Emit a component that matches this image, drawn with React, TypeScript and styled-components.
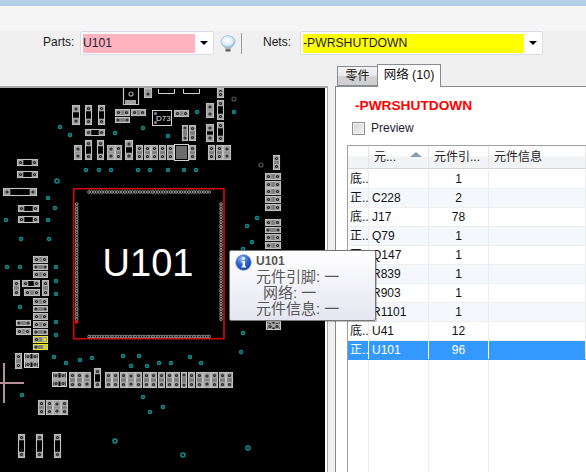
import React from "react";
import styled, { createGlobalStyle } from "styled-components";

const Global = createGlobalStyle`
  html, body { margin: 0; padding: 0; height: 100%; overflow: hidden; background: #f0f0f0; }
  #root { height: 472px; width: 586px; overflow: hidden; }
  * { box-sizing: border-box; }
`;

const Window = styled.div`
  position: relative;
  width: 586px;
  height: 472px;
  display: flex;
  flex-direction: column;
  background: #f0f0f0;
  overflow: hidden;
  font-family: "Liberation Sans", "Noto Sans CJK SC", sans-serif;
  font-size: 12px;
  color: #111;
`;
const TitleStrip = styled.div`
  height: 6px;
  background: #b4cee8;
  flex: none;
`;
const RibbonBand = styled.div`
  height: 25px;
  background: #f5f5f5;
  flex: none;
`;
const Toolbar = styled.div`
  height: 33px;
  flex: none;
  display: flex;
  align-items: flex-start;
  padding-left: 43px;
`;
const ToolLabel = styled.span<{ $width: number }>`
  width: ${(p) => p.$width}px;
  line-height: 23px;
  font-size: 12px;
  color: #1a1a1a;
  flex: none;
`;
const Combo = styled.div<{ $width: number }>`
  width: ${(p) => p.$width}px;
  height: 24px;
  flex: none;
  display: flex;
  align-items: center;
  padding: 2px 0 2px 2px;
  background: #fff;
  border: 1px solid #d9dde3;
  border-radius: 2px;
`;
const ComboValue = styled.div<{ $bg: string }>`
  flex: 1;
  height: 19px;
  line-height: 18px;
  font-size: 12.2px;
  background: ${(p) => p.$bg};
  color: #1c1c38;
`;
const ComboArrow = styled.div`
  width: 18px;
  flex: none;
  display: flex;
  justify-content: center;
  &::after {
    content: "";
    border-left: 4px solid transparent;
    border-right: 4px solid transparent;
    border-top: 4px solid #000;
  }
`;
const BulbSlot = styled.div`
  width: 26px;
  height: 24px;
  flex: none;
  display: flex;
  align-items: center;
  justify-content: center;
  padding-left: 2px;
`;
const ToolDivider = styled.div`
  width: 1px;
  height: 21px;
  margin: 2px 21px 0 1px;
  background: #9a9a9a;
  flex: none;
`;
const Body = styled.div`
  flex: 1;
  min-height: 0;
  display: flex;
`;
const BoardColumn = styled.div`
  width: 335px;
  flex: none;
  padding-top: 22px;
  display: flex;
  flex-direction: column;
`;
const BoardFrame = styled.div`
  width: 328px;
  flex: 1;
  min-height: 0;
  border-top: 2px solid #a8a8a8;
  border-right: 1px solid #a6a6a6;
  background: #fbfbfb;
  overflow: hidden;
`;
const BoardSvg = styled.svg`
  display: block;
  width: 325px;
  height: 384px;
  background: #000;
`;
const SidePanel = styled.div`
  flex: 1;
  min-width: 0;
  display: flex;
  flex-direction: column;
`;
const TabStrip = styled.div`
  height: 22px;
  flex: none;
  display: flex;
  align-items: flex-end;
  padding-left: 2px;
  position: relative;
  z-index: 1;
`;
const Tab = styled.div<{ $active?: boolean }>`
  height: ${(p) => (p.$active ? 23 : 20)}px;
  width: ${(p) => (p.$active ? 64 : 40)}px;
  margin-bottom: ${(p) => (p.$active ? -1 : 0)}px;
  flex: none;
  text-align: center;
  font-size: ${(p) => (p.$active ? 12.5 : 12)}px;
  line-height: ${(p) => (p.$active ? 20 : 19)}px;
  border: 1px solid #898c95;
  border-bottom: ${(p) => (p.$active ? "none" : "1px solid #898c95")};
  border-right: ${(p) => (p.$active ? "1px solid #898c95" : "none")};
  background: ${(p) => (p.$active ? "#fff" : "linear-gradient(#f3f3f3 0%, #ebebeb 45%, #d2d2d2 55%, #cfcfcf 100%)")};
`;
const PanelBody = styled.div`
  flex: 1;
  min-height: 0;
  border: 1px solid #898c95;
  border-right: none;
  border-bottom: none;
  background: #fff;
  display: flex;
  flex-direction: column;
  padding-left: 11px;
`;
const NetTitle = styled.div`
  margin: 10px 0 0 8px;
  font-size: 13.7px;
  font-weight: bold;
  color: #ff0000;
  line-height: 17px;
`;
const PreviewRow = styled.label`
  display: flex;
  align-items: center;
  gap: 6px;
  margin: 6px 0 0 5px;
  height: 16px;
  font-size: 12px;
  color: #1c1c38;
`;
const CheckBox = styled.span`
  width: 13px;
  height: 13px;
  flex: none;
  border: 1px solid #8e8f8f;
  background: linear-gradient(135deg, #d4d4d4, #f4f4f4);
  box-shadow: inset 0 0 0 1px #f4f4f4;
`;
const Table = styled.div`
  flex: 1;
  min-height: 0;
  margin-top: 9px;
  border-top: 1px solid #a0a0a0;
  border-left: 1px solid #a0a0a0;
  display: flex;
  flex-direction: column;
`;
const HeaderRow = styled.div`
  height: 23px;
  flex: none;
  display: grid;
  grid-template-columns: 21px 60px 60px 1fr;
  margin-bottom: 1px;
  border-bottom: 1px solid #d5d5d5;
  background: linear-gradient(#fdfdfd 0%, #fdfdfd 45%, #f2f3f4 50%, #f2f3f4 100%);
`;
const HeaderCell = styled.div`
  position: relative;
  padding: 2px 0 0 5px;
  line-height: 18px;
  font-size: 12px;
  color: #222;
  border-right: 1px solid #e6e6e6;
  white-space: nowrap;
`;
const SortArrow = styled.span`
  position: absolute;
  right: 6px;
  top: 6px;
  border-left: 6px solid transparent;
  border-right: 6px solid transparent;
  border-bottom: 5px solid #8e9bab;
`;
const Row = styled.div<{ $selected?: boolean; $alt?: boolean }>`
  height: 19px;
  flex: none;
  display: grid;
  grid-template-columns: 21px 60px 60px 1fr;
  line-height: 19px;
  font-size: 12px;
  color: ${(p) => (p.$selected ? "#fff" : "#111")};
  background: ${(p) => (p.$selected ? "#3399ff" : p.$alt ? "#f4f7fb" : "#fff")};
  border-bottom: 1px solid ${(p) => (p.$selected ? "#3399ff" : "#f0f0f0")};
`;
const Cell = styled.div<{ $center?: boolean; $inset?: number; $selected?: boolean }>`
  padding-left: ${(p) => p.$inset ?? 0}px;
  text-align: ${(p) => (p.$center ? "center" : "left")};
  border-right: 1px solid ${(p) => (p.$selected ? "#fff" : "#ececec")};
  white-space: nowrap;
  overflow: hidden;
`;
const FillerRow = styled.div`
  flex: 1;
  display: grid;
  grid-template-columns: 21px 60px 60px 1fr;
`;
const FillerCell = styled.div`
  border-right: 1px solid #ececec;
`;
const Tooltip = styled.div`
  position: absolute;
  left: 229px;
  top: 250px;
  width: 147px;
  height: 71px;
  z-index: 3;
  display: flex;
  gap: 4px;
  padding: 3px 0 0 5px;
  border: 1px solid #767676;
  border-radius: 2px;
  background: linear-gradient(#ffffff, #e4e5f0);
  box-shadow: 1px 1px 1px rgba(0, 0, 0, 0.25);
  color: #575757;
`;
const TipIcon = styled.svg`
  width: 17px;
  height: 17px;
  flex: none;
`;
const TipText = styled.div`
  display: flex;
  flex-direction: column;
`;
const TipTitle = styled.div`
  font-size: 12px;
  font-weight: bold;
  line-height: 14px;
  margin-bottom: 1px;
  color: #555;
`;
const TipLine = styled.div<{ $indent?: number }>`
  padding-left: ${(p) => p.$indent ?? 0}px;
  font-size: 15px;
  line-height: 16px;
  white-space: nowrap;
`;

type PartDef = [number, number, number, number];

const verticals: PartDef[] = [
  [72, 105, 8, 20], [85, 105, 7, 20], [98, 105, 7, 20],
  [74, 145, 8, 15], [85, 140, 7, 20], [97, 140, 7, 20], [107, 145, 8, 15], [115, 145, 7, 15],
  [125, 140, 8, 20], [136, 145, 7, 15], [144, 145, 7, 15], [151, 145, 7, 15], [159, 145, 7, 15], [167, 145, 7, 15],
  [189, 145, 7, 15], [208, 145, 7, 15], [216, 145, 7, 15], [223, 145, 8, 15],
  [206, 103, 8, 15], [217, 100, 7, 20], [206, 124, 8, 18], [217, 122, 7, 20], [182, 125, 6, 16], [189, 125, 7, 16],
  [217, 88, 7, 10], [144, 88, 8, 10],
  [273, 155, 7, 15],
  [13, 280, 7, 16], [42, 280, 7, 16],
  [15, 353, 7, 16], [69, 372, 7, 16], [76, 372, 7, 16], [83, 372, 8, 16], [94, 368, 7, 20],
  [105, 372, 7, 16], [112, 372, 7, 16], [120, 372, 7, 16], [127, 372, 8, 16], [135, 372, 7, 16], [143, 372, 7, 16],
  [150, 372, 7, 16], [158, 372, 7, 16], [166, 372, 7, 16], [173, 372, 7, 16], [181, 372, 6, 16], [188, 372, 7, 16],
  [196, 372, 7, 16], [203, 372, 8, 16], [211, 372, 7, 16], [219, 372, 7, 16], [226, 372, 7, 16],
  [38, 400, 7, 15], [46, 400, 7, 15], [53, 400, 8, 15], [61, 400, 7, 15],
  [18, 434, 7, 24], [36, 434, 7, 24], [54, 434, 7, 24],
];

const horizontals: PartDef[] = [
  [115, 109, 15, 7], [131, 109, 15, 7], [115, 117, 15, 6], [85, 129, 20, 7], [174, 110, 15, 7],
  [265, 173, 16, 7], [265, 181, 16, 7], [265, 188, 16, 7], [265, 196, 16, 7], [265, 204, 16, 7],
  [265, 219, 16, 7], [265, 227, 16, 6], [265, 234, 16, 7], [265, 242, 16, 7],
  [17, 159, 21, 7], [17, 171, 21, 7], [3, 188, 34, 8], [18, 205, 21, 7], [18, 216, 21, 7],
  [33, 256, 15, 7], [33, 264, 15, 6], [33, 271, 15, 7], [22, 280, 18, 7], [24, 289, 16, 7],
  [33, 298, 15, 7], [33, 306, 15, 6], [33, 313, 15, 7], [33, 321, 15, 7], [33, 329, 15, 6],
  [16, 320, 15, 6], [16, 328, 15, 7],
];

const bigParts: PartDef[] = [[24, 353, 15, 15], [52, 372, 15, 15], [266, 321, 15, 9]];

const vias: [number, number][] = [
  [60, 127], [70, 135], [115, 133], [143, 128], [168, 136], [86, 170], [99, 170], [111, 170], [138, 170], [150, 170],
  [168, 170], [48, 198], [55, 208], [48, 220], [6, 220], [197, 112], [234, 112], [184, 170], [196, 170], [257, 218],
  [247, 226], [252, 242], [243, 249], [21, 239], [49, 239], [7, 267], [20, 267], [56, 267], [56, 281], [56, 294],
  [20, 307], [56, 322], [56, 335], [54, 357], [66, 363], [80, 360], [92, 358], [123, 356], [139, 356], [131, 366],
  [147, 366], [159, 363], [171, 363], [190, 357], [201, 363], [241, 352], [22, 395], [143, 397], [150, 412], [163, 407],
  [243, 333],
];
const largeVias: [number, number][] = [[57, 181], [115, 441], [248, 448], [183, 455]];

function Pad({ x, y, s, accent }: { x: number; y: number; s: number; accent?: boolean }) {
  return (
    <>
      <rect x={x - s / 2} y={y - s / 2} width={s} height={s} fill="#a2a2a2" />
      <circle cx={x} cy={y} r={1.6} fill={accent ? "#e6e600" : "#262626"} />
      <circle cx={x} cy={y} r={0.5} fill={accent ? "#e6e600" : "#8a8a8a"} />
    </>
  );
}

function Part({ d, accent }: { d: PartDef; accent?: boolean }) {
  const [x, y, w, h] = d;
  const vertical = h > w;
  const s = Math.min(w, h) - 1.4;
  const stroke = accent ? "#ffff00" : "#c6c6c6";
  const shortBody = Math.max(w, h) <= 16;
  return (
    <g>
      <rect x={x + 0.5} y={y + 0.5} width={w - 1} height={h - 1} fill={shortBody ? "#7c7c7c" : "#000"} stroke={stroke} strokeWidth={1.1} />
      {vertical ? (
        <>
          <Pad x={x + w / 2} y={y + 0.7 + s / 2} s={s} />
          <Pad x={x + w / 2} y={y + h - 0.7 - s / 2} s={s} />
        </>
      ) : (
        <>
          <Pad x={x + 0.7 + s / 2} y={y + h / 2} s={s} />
          <Pad x={x + w - 0.7 - s / 2} y={y + h / 2} s={s} accent={accent} />
        </>
      )}
    </g>
  );
}

function BigPart({ d }: { d: PartDef }) {
  const [x, y, w, h] = d;
  return (
    <g>
      <rect x={x + 0.5} y={y + 0.5} width={w - 1} height={h - 1} fill="#000" stroke="#d0d0d0" />
      <rect x={x + 1} y={y + h / 2 - 2} width={w - 2} height={4} fill="#a8a8a8" />
      {[x + 4, x + w - 4].map((cx) =>
        [y + 3.5, y + h - 3.5].map((cy) => <Pad key={`${cx}-${cy}`} x={cx} y={cy} s={5} />)
      )}
    </g>
  );
}

function Board() {
  const across = Array.from({ length: 48 }, (_, i) => 89 + i * 2.56);
  const down = Array.from({ length: 46 }, (_, i) => 204 + i * 2.56);
  return (
    <BoardSvg viewBox="0 88 325 384">
      <g transform="translate(0 88)">
        <path d="M123.5 0V16.5H138.5V0" fill="none" stroke="#c6c6c6" strokeWidth={1.2} />
        <rect x={125} y={12} width={11} height={4} fill="#a2a2a2" />
        <circle cx={131} cy={6} r={2} fill="none" stroke="#a2a2a2" strokeWidth={1.2} />
        <path d="M158.5 1V5.5H174.5V1M183.5 1V5.5H199.5V1" fill="none" stroke="#d4d4d4" />
        <rect x={152.5} y={22.5} width={19} height={15} fill="#000" stroke="#d4d4d4" />
        <circle cx={155.5} cy={25.5} r={1.5} fill="#888" />
        <circle cx={155.5} cy={34.5} r={1.5} fill="#888" />
        <text x={156} y={32.5} fontSize={8} fill="#e0e0e0" fontFamily="Liberation Sans, sans-serif">D73</text>
        <rect x={174.5} y={56.5} width={14} height={16} fill="#000" stroke="#d4d4d4" />
        <rect x={176} y={58} width={11} height={13} fill="#6c6c6c" />
        <circle cx={234} cy={11} r={2} fill="none" stroke="#555" strokeWidth={1.2} />
        <circle cx={261} cy={77} r={2} fill="none" stroke="#555" strokeWidth={1.2} />
      </g>
      {verticals.map((d) => <Part key={d.join()} d={d} />)}
      {horizontals.map((d) => <Part key={d.join()} d={d} />)}
      <Part d={[33, 336, 15, 7]} accent />
      <Part d={[33, 344, 15, 6]} accent />
      {bigParts.map((d) => <BigPart key={d.join()} d={d} />)}
      <g fill="none" stroke="#0b9095">
        {vias.map(([x, y]) => <circle key={`${x}-${y}`} cx={x} cy={y} r={1.5} strokeWidth={1.5} />)}
        {largeVias.map(([x, y]) => <circle key={`${x}-${y}`} cx={x} cy={y} r={2} strokeWidth={1.5} />)}
      </g>
      <rect x={73.7} y={188.7} width={150.3} height={150} fill="none" stroke="#c80a0a" strokeWidth={1.7} />
      <g fill="none" stroke="#989898" strokeWidth={1}>
        {across.filter((x) => x < 210).map((x) => (
          <React.Fragment key={x}>
            <circle cx={x} cy={192} r={1.3} />
            <circle cx={x} cy={336.5} r={1.3} />
          </React.Fragment>
        ))}
        {down.map((y) => (
          <React.Fragment key={y}>
            <circle cx={76.7} cy={y} r={1.3} />
            <circle cx={221} cy={y} r={1.3} />
          </React.Fragment>
        ))}
      </g>
      <rect x={75} y={320.5} width={3} height={3} fill="#ee1111" />
      <text x={148} y={276} textAnchor="middle" fontSize={38} fill="#fff" fontFamily="Liberation Sans, sans-serif">U101</text>
      <rect x={3} y={363} width={2} height={40} fill="#b78f96" />
      <rect x={0} y={382} width={24} height={2} fill="#b78f96" />
    </BoardSvg>
  );
}

function Bulb() {
  return (
    <svg width="16" height="17" viewBox="0 0 16 17">
      <defs>
        <radialGradient id="bulbGlass" cx="45%" cy="45%" r="60%">
          <stop offset="0" stopColor="#ffffff" />
          <stop offset="0.6" stopColor="#dff0f8" />
          <stop offset="1" stopColor="#7fb4d6" />
        </radialGradient>
      </defs>
      <path d="M8 .7C4 .7 1 3.4 1 6.8c0 2.4 2 3.7 3.2 5.4h7.6C13 10.5 15 9.2 15 6.8 15 3.4 12 .7 8 .7Z" fill="url(#bulbGlass)" stroke="#8fbdd8" strokeWidth=".7" />
      <rect x="5" y="12" width="6" height="2.2" fill="#b5b5b5" />
      <rect x="5.5" y="14.2" width="5" height="2.3" fill="#5d5d5d" />
    </svg>
  );
}

function InfoIcon() {
  return (
    <TipIcon viewBox="0 0 17 17">
      <defs>
        <radialGradient id="infoGlobe" cx="40%" cy="25%" r="80%">
          <stop offset="0" stopColor="#9cc0f5" />
          <stop offset="0.5" stopColor="#2f63cf" />
          <stop offset="1" stopColor="#1b3f9f" />
        </radialGradient>
      </defs>
      <circle cx="8.5" cy="8.5" r="7.7" fill="url(#infoGlobe)" stroke="#5c7fc0" strokeWidth=".7" />
      <circle cx="8.5" cy="4.6" r="1.4" fill="#fff" />
      <path d="M6.6 7H10v5.300h1.100v1.200H6.500v-1.200h1.200V8.200H6.600Z" fill="#fff" />
    </TipIcon>
  );
}

const rows = [
  ["底..", "", "1"],
  ["正..", "C228", "2"],
  ["底..", "J17", "78"],
  ["正..", "Q79", "1"],
  ["正..", "Q147", "1"],
  ["正..", "R839", "1"],
  ["正..", "R903", "1"],
  ["正..", "R1101", "1"],
  ["底..", "U41", "12"],
  ["正..", "U101", "96"],
];

export default function App() {
  return (
    <Window>
      <Global />
      <TitleStrip />
      <RibbonBand />
      <Toolbar>
        <ToolLabel $width={37}>Parts:</ToolLabel>
        <Combo $width={134}>
          <ComboValue $bg="#ffb3be">U101</ComboValue>
          <ComboArrow />
        </Combo>
        <BulbSlot><Bulb /></BulbSlot>
        <ToolDivider />
        <ToolLabel $width={37}>Nets:</ToolLabel>
        <Combo $width={243}>
          <ComboValue $bg="#ffff00">-PWRSHUTDOWN</ComboValue>
          <ComboArrow />
        </Combo>
      </Toolbar>
      <Body>
        <BoardColumn>
          <BoardFrame>
            <Board />
          </BoardFrame>
        </BoardColumn>
        <SidePanel>
          <TabStrip>
            <Tab>零件</Tab>
            <Tab $active>网络 (10)</Tab>
          </TabStrip>
          <PanelBody>
            <NetTitle>-PWRSHUTDOWN</NetTitle>
            <PreviewRow>
              <CheckBox />
              Preview
            </PreviewRow>
            <Table>
              <HeaderRow>
                <HeaderCell />
                <HeaderCell>元...<SortArrow /></HeaderCell>
                <HeaderCell>元件引...</HeaderCell>
                <HeaderCell>元件信息</HeaderCell>
              </HeaderRow>
              {rows.map((r, i) => {
                const selected = i === rows.length - 1;
                return (
                  <Row key={i} $selected={selected} $alt={i % 2 === 1}>
                    <Cell $inset={2} $selected={selected}>{r[0]}</Cell>
                    <Cell $inset={3} $selected={selected}>{r[1]}</Cell>
                    <Cell $center $selected={selected}>{r[2]}</Cell>
                    <Cell />
                  </Row>
                );
              })}
              <FillerRow>
                <FillerCell />
                <FillerCell />
                <FillerCell />
              </FillerRow>
            </Table>
          </PanelBody>
        </SidePanel>
      </Body>
      <Tooltip>
        <InfoIcon />
        <TipText>
          <TipTitle>U101</TipTitle>
          <TipLine>元件引脚: 一</TipLine>
          <TipLine $indent={7}>网络: 一</TipLine>
          <TipLine>元件信息: 一</TipLine>
        </TipText>
      </Tooltip>
    </Window>
  );
}
